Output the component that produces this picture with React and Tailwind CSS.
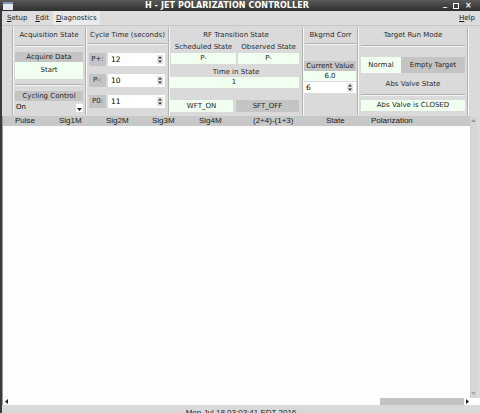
import React from 'react'

function VSep() {
  return <div className="w-[2px] self-stretch border-l border-l-[#b2b2b2] border-r border-r-[#f7f7f7]" />
}

function HLine({ className = '' }) {
  return <div className={`h-[2px] border-t border-t-[#b2b2b2] border-b border-b-[#f7f7f7] ${className}`} />
}

function Spinner() {
  return (
    <svg width="6" height="9" viewBox="0 0 6 9" className="shrink-0">
      <rect x="0" y="0" width="6" height="9" fill="#e4e4e4" />
      <path d="M1 3.5 L3 1.2 L5 3.5 Z" fill="#303030" />
      <path d="M1 5.5 L3 7.8 L5 5.5 Z" fill="#303030" />
    </svg>
  )
}

function Green({ children, className = '' }) {
  return (
    <div className={`bg-[#f0fff0] flex items-center justify-center text-[#1e1e1e] ${className}`}>
      {children}
    </div>
  )
}

function Gray({ children, className = '' }) {
  return (
    <div className={`bg-[#c4c4c4] flex items-center justify-center text-[#262626] ${className}`}>
      {children}
    </div>
  )
}

function SpinRow({ label, value }) {
  return (
    <div className="h-[13px] flex items-stretch pl-[2px]">
      <Gray className="w-[17px]">{label}</Gray>
      <div className="ml-[2px] w-[57px] bg-white flex items-center pl-[3px] pr-[2px] text-black">
        <span className="flex-1 text-[7.5px]">{value}</span>
        <Spinner />
      </div>
    </div>
  )
}

const cols = [
  ['Pulse', 'w-[44px]'],
  ['Sig1M', 'w-[47px]'],
  ['Sig2M', 'w-[46px]'],
  ['Sig3M', 'w-[47px]'],
  ['Sig4M', 'w-[54px]'],
  ['(2+4)-(1+3)', 'w-[73px]'],
  ['State', 'w-[45px]'],
  ['Polarization', 'w-[60px]'],
]

export default function App() {
  return (
    <div className="w-[480px] h-[413px] overflow-hidden bg-[#dadada] flex flex-col font-['DejaVu_Sans',sans-serif] text-[7px] leading-none text-[#2a2a2a]">
      {/* window title */}
      <div className="h-[11px] shrink-0 flex items-center bg-linear-to-b from-[#5a5a5a] to-[#2f2f2f] text-white">
        <div className="w-[14px] flex justify-center pl-[1px]">
          <div className="w-[10px] h-[8px] bg-[#e3e8ef] border-t-2 border-t-[#7f97b8]" />
        </div>
        <div className="flex-1 text-center font-bold text-[8px] tracking-[0.1px]">H - JET POLARIZATION CONTROLLER</div>
        <div className="w-[40px] flex items-center gap-[6px] pl-[3px] text-[8px] font-bold">
          <span className="leading-none -mt-[3px]">_</span>
          <span className="w-[6px] h-[6px] border border-white" />
          <span className="leading-none">×</span>
        </div>
      </div>

      <div className="flex-1 flex flex-col border-l-2 border-l-[#3a3a3a] min-h-0">
        {/* menu */}
        <div className="h-[15px] shrink-0 flex items-stretch bg-[#dcdcdc] border-b border-b-[#c6c6c6] text-[#1a1a1a]">
          <div className="pl-[5px] pr-[4px] flex items-center"><span className="underline">S</span>etup</div>
          <div className="px-[4px] flex items-center"><span className="underline">E</span>dit</div>
          <div className="px-[3px] flex items-center bg-[#eaeaea]"><span className="underline">D</span>iagnostics</div>
          <div className="flex-1" />
          <div className="pr-[5px] flex items-center"><span className="underline">H</span>elp</div>
        </div>

        {/* control panels */}
        <div className="h-[89px] shrink-0 flex pl-[10px] pt-[1px]">
          <VSep />

          {/* Acquisition State */}
          <div className="w-[71px] flex flex-col pl-[1px] pr-[2px]">
            <div className="h-[12px] mt-[2px] flex items-center justify-center">Acquisition State</div>
            <HLine className="mt-[4px]" />
            <Gray className="h-[10px] mt-[5px]">Acquire Data</Gray>
            <Green className="h-[17px]">Start</Green>
            <HLine className="mt-[5px]" />
            <Gray className="h-[10px] mt-[5px]">Cycling Control</Gray>
            <div className="h-[12px] flex items-center pl-[1px] text-black">
              <span className="flex-1">On</span>
              <div className="w-[7px] h-[8px] bg-white flex items-end justify-center pb-[1px] mt-[2px]">
                <svg width="5" height="3" viewBox="0 0 5 3"><path d="M0 0 L5 0 L2.5 3 Z" fill="#202020" /></svg>
              </div>
            </div>
          </div>

          <VSep />

          {/* Cycle Time */}
          <div className="w-[81px] flex flex-col">
            <div className="h-[12px] mt-[2px] flex items-center justify-center">Cycle Time (seconds)</div>
            <HLine className="mt-[2px] mx-[1px]" />
            <div className="mt-[8px]"><SpinRow label="P+:" value="12" /></div>
            <div className="mt-[8px]"><SpinRow label="P-:" value="10" /></div>
            <div className="mt-[8px]"><SpinRow label="P0:" value="11" /></div>
          </div>

          <VSep />

          {/* RF Transition State */}
          <div className="w-[132px] flex flex-col">
            <div className="h-[12px] mt-[2px] flex items-center justify-center">RF Transition State</div>
            <div className="h-[8px] mt-[3px] flex pl-[1px] gap-[2px]">
              <div className="w-[65px] text-center">Scheduled State</div>
              <div className="w-[61px] text-center">Observed State</div>
            </div>
            <div className="h-[11px] mt-[1px] flex pl-[1px] gap-[2px]">
              <Green className="w-[65px]">P-</Green>
              <Green className="w-[61px]">P-</Green>
            </div>
            <div className="h-[10px] mt-[3px] flex items-center justify-center">Time in State</div>
            <Green className="h-[11px] w-[130px] -ml-[1px]">1</Green>
            <div className="h-[12px] mt-[12px] flex gap-[3px]">
              <Green className="w-[63px]">WFT_ON</Green>
              <Gray className="w-[63px]">SFT_OFF</Gray>
            </div>
          </div>

          <VSep />

          {/* Bkgrnd Corr */}
          <div className="w-[53px] flex flex-col">
            <div className="h-[12px] mt-[2px] flex items-center justify-center">Bkgrnd Corr</div>
            <HLine className="mt-[2px] mx-[1px]" />
            <Gray className="h-[10px] mt-[16px] w-[52px]">Current Value</Gray>
            <Green className="h-[10px] w-[52px]">6.0</Green>
            <div className="h-[11px] mt-[1px] w-[52px] bg-white flex items-center pl-[2px] pr-[3px] text-black">
              <span className="flex-1 text-[7.5px]">6</span>
              <Spinner />
            </div>
          </div>

          <VSep />

          {/* Target Run Mode */}
          <div className="w-[108px] flex flex-col pl-[2px] pr-[2px]">
            <div className="h-[12px] mt-[2px] flex items-center justify-center">Target Run Mode</div>
            <HLine className="mt-[4px]" />
            <div className="h-[16px] mt-[10px] flex">
              <Green className="w-[40px]">Normal</Green>
              <Gray className="w-[64px]">Empty Target</Gray>
            </div>
            <div className="h-[10px] mt-[6px] flex items-center justify-center">Abs Valve State</div>
            <HLine className="mt-[5px]" />
            <Green className="h-[11px] mt-[4px]">Abs Valve is CLOSED</Green>
          </div>

          <VSep />
        </div>

        {/* data table */}
        <div className="flex-1 flex min-h-0 pt-[1px]">
          <div className="w-[1px] bg-[#9a9a9a]" />
          <div className="w-[467px] flex flex-col bg-[#fdfdfd] font-['Liberation_Sans',sans-serif]">
            <div className="h-[10px] shrink-0 flex items-center bg-[#c8c8c8] pl-[12px] text-[8px] text-[#202020]">
              {cols.map(([name, w]) => (
                <span key={name} className={`${w} shrink-0`}>{name}</span>
              ))}
            </div>
            <div className="flex-1" />
          </div>
          <div className="w-[7px] bg-[#d5d5d5] flex flex-col items-center justify-between py-[3px]">
            <svg width="5" height="3" viewBox="0 0 5 3"><path d="M0 3 L2.5 0 L5 3 Z" fill="#9a9a9a" /></svg>
            <svg width="5" height="3" viewBox="0 0 5 3"><path d="M0 0 L5 0 L2.5 3 Z" fill="#a8a8a8" /></svg>
          </div>
        </div>

        {/* horizontal scrollbar */}
        <div className="h-[7px] shrink-0 flex items-stretch bg-[#fdfdfd]">
          <div className="w-[1px] bg-[#9a9a9a]" />
          <div className="w-[467px] flex items-center">
            <svg width="3" height="5" viewBox="0 0 3 5" className="ml-[2px]"><path d="M3 0 L0 2.5 L3 5 Z" fill="#202020" /></svg>
            <div className="flex-1" />
            <div className="w-[84px] self-stretch bg-[#c3c3c3]" />
            <svg width="3" height="5" viewBox="0 0 3 5" className="ml-[2px] mr-[1px]"><path d="M0 0 L3 2.5 L0 5 Z" fill="#202020" /></svg>
          </div>
          <div className="w-[7px] bg-white" />
        </div>

        {/* status bar */}
        <div className="h-[8px] shrink-0 overflow-hidden bg-[#d9d9d9] flex justify-center pt-[4px] font-['Liberation_Sans',sans-serif] text-[8px] text-[#1a1a1a]">
          Mon Jul 18 03:03:41 EDT 2016
        </div>
      </div>
    </div>
  )
}
